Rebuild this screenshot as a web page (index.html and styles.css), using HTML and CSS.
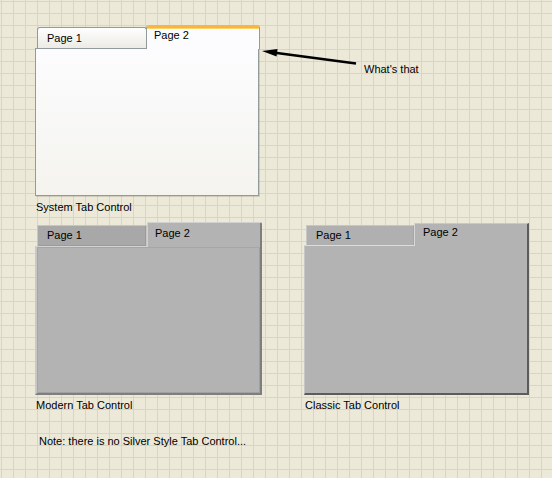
FILE: index.html
```html
<!DOCTYPE html>
<html>
<head>
<meta charset="utf-8">
<link rel="stylesheet" href="styles.css">
</head>
<body>
<div class="panel">
  <div class="row1">
    <div class="tabctl sys">
      <div class="tabs">
        <div class="tab t1">Page 1</div>
        <div class="tab t2">Page 2</div>
      </div>
      <div class="pane"></div>
    </div>
    <div class="callout">
      <svg class="arrow" width="100" height="25" viewBox="0 0 100 25">
        <line x1="14" y1="7.8" x2="95" y2="18.5" stroke="#000" stroke-width="2.6"/>
        <polygon points="1,6 16.5,4 15.6,11.6" fill="#000"/>
      </svg>
      <span class="callout-text">What's that</span>
    </div>
  </div>
  <div class="label">System Tab Control</div>
  <div class="row2">
    <div class="col">
      <div class="tabctl mod">
        <div class="tabs">
          <div class="tab t1">Page 1</div>
          <div class="tab t2">Page 2</div>
        </div>
        <div class="pane"></div>
      </div>
      <div class="label">Modern Tab Control</div>
    </div>
    <div class="col">
      <div class="tabctl cls">
        <div class="tabs">
          <div class="tab t1">Page 1</div>
          <div class="tab t2">Page 2</div>
        </div>
        <div class="pane"></div>
      </div>
      <div class="label">Classic Tab Control</div>
    </div>
  </div>
  <div class="note">Note: there is no Silver Style Tab Control...</div>
</div>
</body>
</html>
```
FILE: styles.css
```css
* { box-sizing: border-box; }
html {
  min-height: 100%;
  background-color: #ECE9D8;
  background-image:
    linear-gradient(to right, #D9D5C2 1px, transparent 1px),
    linear-gradient(to bottom, #D9D5C2 1px, transparent 1px);
  background-size: 12px 12px;
  background-position: 1px 1px;
}
body {
  margin: 0;
  font-family: "Liberation Sans", Arial, sans-serif;
  font-size: 11px;
  line-height: 13px;
  color: #000;
}
.panel { padding: 25px 0 0 35px; }
.row1 { display: flex; align-items: flex-start; }

.tabs { display: flex; align-items: flex-end; padding-left: 2px; position: relative; z-index: 1; }
.tab { white-space: nowrap; }

/* System (XP) */
.sys { width: 225px; }
.sys .tabs { height: 23px; }
.sys .t1 {
  width: 110px; height: 21px;
  border: 1px solid #919B9C; border-bottom: 0;
  border-radius: 3px 3px 0 0;
  background: linear-gradient(#FEFEFE, #ECEBE6);
  padding: 4px 0 0 9px;
}
.sys .t2 {
  width: 114px; height: 24px; margin-left: -1px; margin-bottom: -1px;
  border: 1px solid #919B9C; border-bottom: 0;
  border-top: 3px solid #F7B640;
  border-radius: 3px 3px 0 0;
  background: #FCFCFE;
  padding: 1px 0 0 7px;
  box-shadow: inset 0 1px 0 #FFD36B;
}
.sys .pane {
  width: 224px; height: 148px;
  border: 1px solid #919B9C;
  background: linear-gradient(#FCFCFE, #F4F3EE);
  box-shadow: 1px 1px 0 rgba(0,0,0,0.12);
}

.callout { display: flex; align-items: flex-start; margin-left: 1px; }
.arrow { display: block; margin-top: 20px; }
.callout-text { margin-top: 38px; margin-left: 3px; }

.label { margin: 5px 0 0 1px; }
.row2 { display: flex; gap: 42px; margin-top: 8px; }
.row2 .label { margin-top: 4px; }

/* Modern */
.mod { width: 227px; }
.mod .tabs { height: 24px; }
.mod .t1 {
  width: 110px; height: 21px;
  background: #A8A8A8;
  border: 1px solid #C6C6C6; border-bottom: 0;
  box-shadow: inset -1px -1px 0 #9C9C9C;
  padding: 3px 0 0 9px;
}
.mod .t2 {
  width: 115px; height: 25px; margin-bottom: -1px;
  background: #B3B3B3;
  border-top: 1px solid #D2D2D2; border-left: 1px solid #D2D2D2;
  border-right: 2px solid #7E7E7E;
  border-radius: 0 2px 0 0;
  padding: 4px 0 0 7px;
}
.mod .pane {
  width: 227px; height: 149px;
  background: #B3B3B3;
  border-top: 1px solid #D2D2D2; border-left: 2px solid #C8C8C8;
  border-right: 2px solid #7E7E7E; border-bottom: 2px solid #7E7E7E;
  box-shadow: inset 1px 1px 0 #A6A6A6, inset -1px -1px 0 #A0A0A0;
}

/* Classic */
.cls { width: 225px; }
.cls .tabs { height: 23px; }
.cls .t1 {
  width: 108px; height: 20px;
  background: #B0B0B0;
  border-top: 1px solid #C6C6C6; border-left: 1px solid #C6C6C6;
  border-right: 1px solid #A6A6A6;
  padding: 3px 0 0 9px;
}
.cls .t2 {
  width: 115px; height: 23px; margin-bottom: -1px;
  background: #B3B3B3;
  border-top: 1px solid #C8C8C8; border-left: 1px solid #D8D8D8;
  border-right: 2px solid #5C5C5C;
  padding: 2px 0 0 8px;
}
.cls .pane {
  width: 225px; height: 150px;
  background: #B3B3B3;
  border-top: 1px solid #DCDCDC; border-left: 1px solid #C6C6C6;
  border-right: 2px solid #5C5C5C; border-bottom: 2px solid #5C5C5C;
}

.note { margin: 23px 0 0 4px; }
```
